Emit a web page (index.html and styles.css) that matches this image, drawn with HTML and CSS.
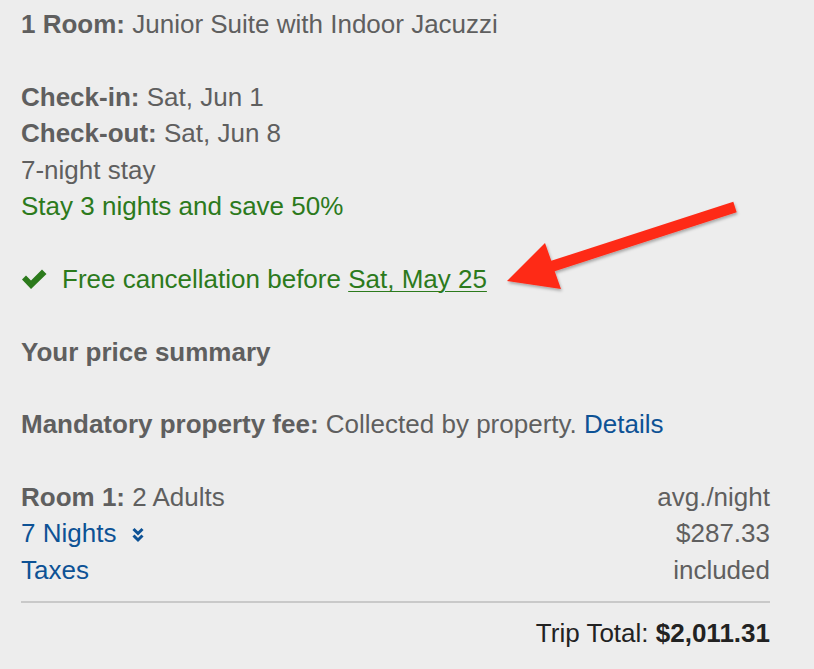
FILE: index.html
```html
<!DOCTYPE html>
<html>
<head>
<meta charset="utf-8">
<link rel="stylesheet" href="styles.css">
</head>
<body>
<div class="page">
  <div class="line room"><b>1 Room:</b> Junior Suite with Indoor Jacuzzi</div>

  <div class="block dates">
    <div class="line"><b>Check-in:</b> Sat, Jun 1</div>
    <div class="line"><b>Check-out:</b> Sat, Jun 8</div>
    <div class="line">7-night stay</div>
    <div class="line green">Stay 3 nights and save 50%</div>
  </div>

  <div class="block cancel green">
    <svg class="check" width="25" height="20" viewBox="0 0 25 20"><polygon points="0,10.5 4,6.5 9,11.5 20,0.5 24.5,5 9,20" fill="#2c7a1c"/></svg>
    <span class="cancel-text">Free cancellation before <u>Sat, May 25</u></span>
  </div>

  <div class="block line summary"><b>Your price summary</b></div>

  <div class="block line fee"><b>Mandatory property fee:</b> Collected by property. <a class="link">Details</a></div>

  <div class="block rows">
    <div class="row"><span><b>Room 1:</b> 2 Adults</span><span>avg./night</span></div>
    <div class="row"><span class="link">7 Nights <svg class="chev" width="12" height="16" viewBox="0 0 12 16"><path d="M1.5 2 L6 6.5 L10.5 2 M1.5 8.5 L6 13 L10.5 8.5" fill="none" stroke="#0d5295" stroke-width="3"/></svg></span><span>$287.33</span></div>
    <div class="row"><span class="link">Taxes</span><span>included</span></div>
  </div>
  <div class="total">Trip Total: <b>$2,011.31</b></div>
</div>
<svg class="arrow" width="814" height="669" viewBox="0 0 814 669">
  <defs>
    <filter id="sh" x="-10%" y="-10%" width="130%" height="140%">
      <feDropShadow dx="1" dy="2" stdDeviation="1.5" flood-color="#000" flood-opacity="0.3"/>
    </filter>
  </defs>
  <polygon filter="url(#sh)" fill="#fe2a18" points="733.3,201.8 551.3,260.8 545,243 507,281 561,289 554.7,271.2 736.7,212.2"/>
</svg>
</body>
</html>
```
FILE: styles.css
```css
html, body {
  margin: 0;
  padding: 0;
  background: #ededed;
}
body {
  font-family: "Liberation Sans", Arial, sans-serif;
  font-size: 26px;
  color: #5f5f5f;
  width: 814px;
  height: 669px;
  overflow: hidden;
  position: relative;
}
.page {
  padding: 6px 44px 0 21px;
  line-height: 36.6px;
}
b { font-weight: bold; }
.block { margin-top: 36px; }
.green { color: #2c7a1c; }
.link { color: #0d5295; text-decoration: none; }
.cancel {
  display: flex;
  align-items: center;
  gap: 15px;
  margin-left: 1px;
}
.cancel u { text-decoration-thickness: 1px; text-underline-offset: 3px; }
.row {
  display: flex;
  justify-content: space-between;
}
.chev { margin-left: 8px; vertical-align: -1px; }
.total {
  border-top: 2px solid #c9c9c9;
  margin-top: 12px;
  padding-top: 12px;
  text-align: right;
  color: #222;
}
.total b { color: #222; }
.arrow {
  position: absolute;
  left: 0;
  top: 0;
  pointer-events: none;
}
```
